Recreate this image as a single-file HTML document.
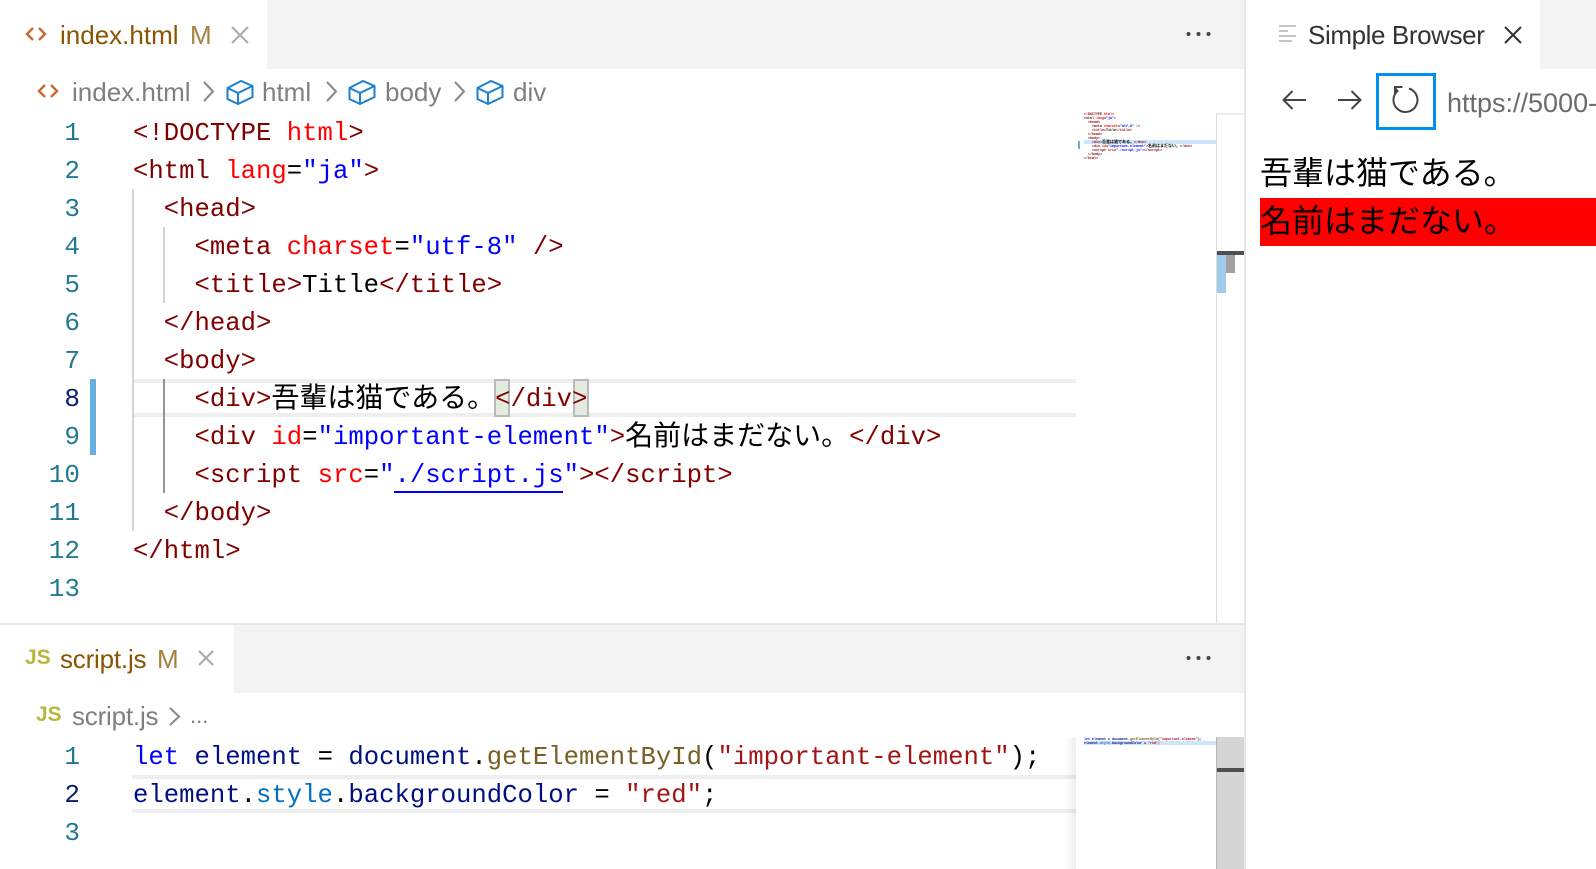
<!DOCTYPE html>
<html lang="ja"><head><meta charset="utf-8"><title>VS Code</title>
<style>
html,body{margin:0;padding:0;background:#fff;width:1596px;height:869px;overflow:hidden}
#r{position:relative;width:1596px;height:869px;overflow:hidden;font-family:"Liberation Sans","Noto Sans CJK JP",sans-serif}
.a{position:absolute}
.t{position:absolute;white-space:pre;line-height:38px}
.c{position:absolute;left:133px;margin-top:2px;white-space:pre;height:38px;line-height:38px;font-family:"Liberation Mono",monospace;font-size:25.63px;color:#000}
.n{position:absolute;left:30px;width:50px;margin-top:1px;text-align:right;height:38px;line-height:38px;font-family:"Liberation Mono",monospace;font-size:26px;color:#237893}
.j{font-family:"Noto Sans CJK JP",sans-serif;font-size:28px;line-height:0;color:#000;position:relative;top:1px}
.g{color:#800000}.r{color:#f00}.b{color:#00f}.v{color:#001080}.f{color:#795e26}.s{color:#a31515}.p{color:#0070c1}
.m{position:absolute;left:1084px;transform:scale(.125);transform-origin:0 0;white-space:pre;font-family:"Liberation Mono",monospace;font-size:26.65px;font-weight:bold;line-height:32px;color:#000}
.m .j{font-size:32px;top:0}
svg{position:absolute;overflow:visible}
</style></head><body><div id="r">

<!-- top tab bar -->
<div class="a" style="left:267px;top:0;width:978px;height:69px;background:#f3f3f3"></div>
<svg style="left:25px;top:27px" width="22" height="14" fill="none" stroke="#c9682f" stroke-width="2.4"><path d="M8 1 L2 7 L8 13M14 1 L20 7 L14 13"/></svg>
<div class="t" style="left:60px;top:16px;font-size:26px;color:#895503">index.html</div>
<div class="t" style="left:190px;top:16px;font-size:26px;color:#a5813f">M</div>
<svg style="left:231px;top:26px" width="18" height="18" fill="none" stroke="#aaa" stroke-width="2"><path d="M1 1 L17 17M17 1 L1 17"/></svg>
<svg style="left:1186px;top:31px" width="24" height="6" fill="#444"><circle cx="2.5" cy="3" r="2"/><circle cx="12.5" cy="3" r="2"/><circle cx="22.5" cy="3" r="2"/></svg>

<!-- top breadcrumbs -->
<svg style="left:37px;top:84px" width="22" height="14" fill="none" stroke="#c9682f" stroke-width="2.4"><path d="M8 1 L2 7 L8 13M14 1 L20 7 L14 13"/></svg>
<div class="t" style="left:72px;top:73px;font-size:26px;color:#7f7f7f">index.html</div>
<svg style="left:203px;top:81px" width="11" height="21" fill="none" stroke="#888" stroke-width="2"><path d="M1 1 L10 10.5 L1 20"/></svg>
<svg style="left:226px;top:79px" width="28" height="26" fill="none" stroke="#1b80d0" stroke-width="2"><path d="M1.5 9 L15 2 L26.500 7 V18 L12 25 L1.500 20 Z M1.500 9 L12 14 L26.500 7 M12 14 V25"/></svg>
<div class="t" style="left:262px;top:73px;font-size:26px;color:#7f7f7f">html</div>
<svg style="left:326px;top:81px" width="11" height="21" fill="none" stroke="#888" stroke-width="2"><path d="M1 1 L10 10.5 L1 20"/></svg>
<svg style="left:348px;top:79px" width="28" height="26" fill="none" stroke="#1b80d0" stroke-width="2"><path d="M1.5 9 L15 2 L26.500 7 V18 L12 25 L1.500 20 Z M1.500 9 L12 14 L26.500 7 M12 14 V25"/></svg>
<div class="t" style="left:385px;top:73px;font-size:26px;color:#7f7f7f">body</div>
<svg style="left:454px;top:81px" width="11" height="21" fill="none" stroke="#888" stroke-width="2"><path d="M1 1 L10 10.5 L1 20"/></svg>
<svg style="left:476px;top:79px" width="28" height="26" fill="none" stroke="#1b80d0" stroke-width="2"><path d="M1.5 9 L15 2 L26.500 7 V18 L12 25 L1.500 20 Z M1.500 9 L12 14 L26.500 7 M12 14 V25"/></svg>
<div class="t" style="left:513px;top:73px;font-size:26px;color:#7f7f7f">div</div>

<!-- top editor decorations -->
<div class="a" style="left:133px;top:379px;width:943px;height:30px;border-top:4px solid #eee;border-bottom:4px solid #eee"></div>
<div class="a" style="left:90px;top:379px;width:6px;height:76px;background:#66afe0"></div>
<div class="a" style="left:132px;top:189px;width:2px;height:342px;background:#d3d3d3"></div>
<div class="a" style="left:163px;top:227px;width:2px;height:76px;background:#d3d3d3"></div>
<div class="a" style="left:163px;top:379px;width:2px;height:114px;background:#939393"></div>
<div class="a" style="left:494px;top:379px;width:12px;height:34px;background:#e3ebe1;border:2px solid #b9b9b9"></div>
<div class="a" style="left:573px;top:379px;width:12px;height:34px;background:#e3ebe1;border:2px solid #b9b9b9"></div>
<div class="a" style="left:394px;top:491px;width:169px;height:2px;background:#00f"></div>

<!-- top line numbers -->
<div class="n" style="top:113px">1</div>
<div class="n" style="top:151px">2</div>
<div class="n" style="top:189px">3</div>
<div class="n" style="top:227px">4</div>
<div class="n" style="top:265px">5</div>
<div class="n" style="top:303px">6</div>
<div class="n" style="top:341px">7</div>
<div class="n" style="top:379px;color:#0b216f">8</div>
<div class="n" style="top:417px">9</div>
<div class="n" style="top:455px">10</div>
<div class="n" style="top:493px">11</div>
<div class="n" style="top:531px">12</div>
<div class="n" style="top:569px">13</div>

<!-- top code -->
<div class="c" style="top:113px"><span class="g">&lt;!DOCTYPE</span> <span class="r">html</span><span class="g">&gt;</span></div>
<div class="c" style="top:151px"><span class="g">&lt;html</span> <span class="r">lang</span>=<span class="b">"ja"</span><span class="g">&gt;</span></div>
<div class="c" style="top:189px">  <span class="g">&lt;head&gt;</span></div>
<div class="c" style="top:227px">    <span class="g">&lt;meta</span> <span class="r">charset</span>=<span class="b">"utf-8"</span> <span class="g">/&gt;</span></div>
<div class="c" style="top:265px">    <span class="g">&lt;title&gt;</span>Title<span class="g">&lt;/title&gt;</span></div>
<div class="c" style="top:303px">  <span class="g">&lt;/head&gt;</span></div>
<div class="c" style="top:341px">  <span class="g">&lt;body&gt;</span></div>
<div class="c" style="top:379px">    <span class="g">&lt;div&gt;</span><span class="j">吾輩は猫である。</span><span class="g">&lt;/div&gt;</span></div>
<div class="c" style="top:417px">    <span class="g">&lt;div</span> <span class="r">id</span>=<span class="b">"important-element"</span><span class="g">&gt;</span><span class="j">名前はまだない。</span><span class="g">&lt;/div&gt;</span></div>
<div class="c" style="top:455px">    <span class="g">&lt;script</span> <span class="r">src</span>=<span class="b">"./script.js"</span><span class="g">&gt;&lt;/script&gt;</span></div>
<div class="c" style="top:493px">  <span class="g">&lt;/body&gt;</span></div>
<div class="c" style="top:531px"><span class="g">&lt;/html&gt;</span></div>

<!-- top minimap -->
<div class="a" style="left:1078px;top:141px;width:2px;height:8px;background:#66afe0"></div>
<div class="a" style="left:1084px;top:140px;width:132px;height:4px;background:#cfe5fb"></div>
<div class="m" style="top:112px"><span class="g">&lt;!DOCTYPE</span> <span class="r">html</span><span class="g">&gt;</span>
<span class="g">&lt;html</span> <span class="r">lang</span>=<span class="b">"ja"</span><span class="g">&gt;</span>
  <span class="g">&lt;head&gt;</span>
    <span class="g">&lt;meta</span> <span class="r">charset</span>=<span class="b">"utf-8"</span> <span class="g">/&gt;</span>
    <span class="g">&lt;title&gt;</span>Title<span class="g">&lt;/title&gt;</span>
  <span class="g">&lt;/head&gt;</span>
  <span class="g">&lt;body&gt;</span>
    <span class="g">&lt;div&gt;</span><span class="j">吾輩は猫である。</span><span class="g">&lt;/div&gt;</span>
    <span class="g">&lt;div</span> <span class="r">id</span>=<span class="b">"important-element"</span><span class="g">&gt;</span><span class="j">名前はまだない。</span><span class="g">&lt;/div&gt;</span>
    <span class="g">&lt;script</span> <span class="r">src</span>=<span class="b">"./script.js"</span><span class="g">&gt;&lt;/script&gt;</span>
  <span class="g">&lt;/body&gt;</span>
<span class="g">&lt;/html&gt;</span></div>
<div class="a" style="left:1216px;top:113px;width:29px;height:2px;background:#eee"></div>
<div class="a" style="left:1216px;top:113px;width:1px;height:511px;background:#ddd"></div>
<div class="a" style="left:1217px;top:255px;width:9px;height:38px;background:#a1cdec"></div>
<div class="a" style="left:1226px;top:255px;width:9px;height:18px;background:#a0a0a0"></div>
<div class="a" style="left:1217px;top:251px;width:27px;height:4px;background:#4f4f4f"></div>

<!-- horizontal divider -->
<div class="a" style="left:0;top:623px;width:1245px;height:2px;background:#e7e7e7"></div>

<!-- bottom tabs -->
<div class="a" style="left:234px;top:625px;width:1011px;height:68px;background:#f3f3f3"></div>
<div class="t" style="left:25px;top:639px;font-size:21px;font-weight:bold;color:#b7b73b">JS</div>
<div class="t" style="left:60px;top:640px;font-size:26px;letter-spacing:-.2px;color:#895503">script.js</div>
<div class="t" style="left:157px;top:640px;font-size:26px;color:#a5813f">M</div>
<svg style="left:198px;top:650px" width="16" height="16" fill="none" stroke="#aaa" stroke-width="2"><path d="M1 1 L15 15M15 1 L1 15"/></svg>
<svg style="left:1186px;top:655px" width="24" height="6" fill="#444"><circle cx="2.5" cy="3" r="2"/><circle cx="12.5" cy="3" r="2"/><circle cx="22.500" cy="3" r="2"/></svg>

<!-- bottom breadcrumbs -->
<div class="t" style="left:36px;top:696px;font-size:21px;font-weight:bold;color:#b7b73b">JS</div>
<div class="t" style="left:72px;top:697px;font-size:26px;letter-spacing:-.2px;color:#7f7f7f">script.js</div>
<svg style="left:169px;top:707px" width="11" height="19" fill="none" stroke="#888" stroke-width="2"><path d="M1 1 L10 9.500 L1 18"/></svg>
<div class="t" style="left:190px;top:697px;font-size:22px;color:#7f7f7f">...</div>

<!-- bottom editor -->
<div class="a" style="left:132px;top:775px;width:944px;height:30px;border-top:4px solid #eee;border-bottom:4px solid #eee"></div>
<div class="n" style="top:737px">1</div>
<div class="n" style="top:775px;color:#0b216f">2</div>
<div class="n" style="top:813px">3</div>
<div class="c" style="top:737px"><span class="b">let</span> <span class="v">element</span> = <span class="v">document</span>.<span class="f">getElementById</span>(<span class="s">"important-element"</span>);</div>
<div class="c" style="top:775px"><span class="v">element</span>.<span class="p">style</span>.<span class="v">backgroundColor</span> = <span class="s">"red"</span>;</div>

<!-- bottom minimap -->
<div class="a" style="left:1066px;top:737px;width:10px;height:132px;background:linear-gradient(90deg,rgba(0,0,0,0),rgba(0,0,0,.07))"></div>
<div class="a" style="left:1076px;top:737px;width:140px;height:132px;background:#fff"></div>
<div class="a" style="left:1084px;top:741px;width:132px;height:4px;background:#cfe5fb"></div>
<div class="m" style="top:737px"><span class="b">let</span> <span class="v">element</span> = <span class="v">document</span>.<span class="f">getElementById</span>(<span class="s">"important-element"</span>);
<span class="v">element</span>.<span class="p">style</span>.<span class="v">backgroundColor</span> = <span class="s">"red"</span>;</div>
<div class="a" style="left:1216px;top:737px;width:29px;height:132px;background:#d5d5d5"></div>
<div class="a" style="left:1216px;top:737px;width:1px;height:132px;background:#b5b5b5"></div>
<div class="a" style="left:1217px;top:768px;width:27px;height:4px;background:#4f4f4f"></div>

<!-- vertical divider -->
<div class="a" style="left:1244px;top:0;width:2px;height:869px;background:#e7e7e7"></div>

<!-- simple browser -->
<div class="a" style="left:1540px;top:0;width:56px;height:69px;background:#f3f3f3"></div>
<div class="a" style="left:1279px;top:25px;width:17px;height:2px;background:#c4c4c4"></div>
<div class="a" style="left:1279px;top:30px;width:9px;height:2px;background:#c4c4c4"></div>
<div class="a" style="left:1279px;top:35px;width:17px;height:2px;background:#c4c4c4"></div>
<div class="a" style="left:1279px;top:40px;width:13px;height:2px;background:#c4c4c4"></div>
<div class="t" style="left:1308px;top:16px;font-size:26px;letter-spacing:-.4px;color:#333">Simple Browser</div>
<svg style="left:1504px;top:26px" width="18" height="18" fill="none" stroke="#333" stroke-width="2"><path d="M1 1 L17 17M17 1 L1 17"/></svg>

<svg style="left:1282px;top:90px" width="24" height="20" fill="none" stroke="#444" stroke-width="2"><path d="M24 10 H1.500 M10.500 1 L1.500 10 L10.500 19"/></svg>
<svg style="left:1338px;top:90px" width="24" height="20" fill="none" stroke="#444" stroke-width="2"><path d="M0 10 H22.500 M13.500 1 L22.500 10 L13.500 19"/></svg>
<div class="a" style="left:1376px;top:73px;width:54px;height:51px;border:3px solid #0090f1"></div>
<svg style="left:1392px;top:86px" width="26" height="26" fill="none" stroke="#444" stroke-width="2"><path d="M17 2.500 A12 12 0 1 1 5.500 5 L3 2 M10.500 1 H3 V8"/></svg>
<div class="t" style="left:1447px;top:84px;font-size:27px;color:#6b6b6b">https://5000-</div>

<div class="a" style="left:1260px;top:198px;width:336px;height:48px;background:#f00"></div>
<div class="t" style="left:1260px;top:147px;height:48px;line-height:48px;font-family:'Noto Sans CJK JP',sans-serif;font-size:32px;color:#000">吾輩は猫である。</div>
<div class="t" style="left:1260px;top:195px;height:48px;line-height:48px;font-family:'Noto Sans CJK JP',sans-serif;font-size:32px;color:#000">名前はまだない。</div>

</div></body></html>
